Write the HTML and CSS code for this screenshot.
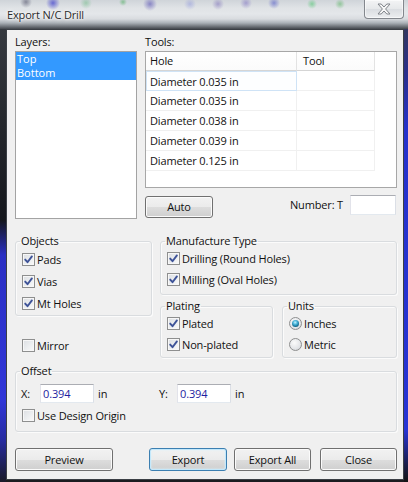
FILE: index.html
```html
<!DOCTYPE html>
<html>
<head>
<meta charset="utf-8">
<title>Export N/C Drill</title>
<link rel="stylesheet" href="styles.css">
</head>
<body>
<div class="window">
  <div class="titlebar">
    <span class="title">Export N/C Drill</span>
    <div class="close-btn">
      <svg width="14" height="12" viewBox="0 0 14 12"><polygon points="1,1 4.2,1 7,4 9.8,1 13,1 8.6,6 13,11 9.8,11 7,8 4.2,11 1,11 5.4,6" fill="#f7f7f7" stroke="#80848a" stroke-width="1" stroke-linejoin="round"/></svg>
    </div>
  </div>
  <div class="client">
    <div class="top-row">
      <div class="layers-col">
        <div class="label">Layers:</div>
        <div class="listbox">
          <div class="list-item sel">Top</div>
          <div class="list-item sel">Bottom</div>
        </div>
      </div>
      <div class="tools-col">
        <div class="label">Tools:</div>
        <div class="grid">
          <div class="grid-head"><div class="c1">Hole</div><div class="c2">Tool</div></div>
          <div class="grid-row"><div class="c1 focus">Diameter 0.035 in</div><div class="c2"></div></div>
          <div class="grid-row"><div class="c1">Diameter 0.035 in</div><div class="c2"></div></div>
          <div class="grid-row"><div class="c1">Diameter 0.038 in</div><div class="c2"></div></div>
          <div class="grid-row"><div class="c1">Diameter 0.039 in</div><div class="c2"></div></div>
          <div class="grid-row"><div class="c1">Diameter 0.125 in</div><div class="c2"></div></div>
        </div>
        <div class="tools-foot">
          <div class="btn auto">Auto</div>
          <div class="number"><span class="number-label">Number: T</span><div class="textbox num-box"></div></div>
        </div>
      </div>
    </div>

    <div class="middle">
      <div class="mid-left">
        <fieldset class="group">
          <legend>Objects</legend>
          <div class="group-body objects-body">
            <div class="opt opt22"><span class="cb"><svg viewBox="0 0 11 11"><path d="M2.2 5.6 L4.5 8.2 L8.9 2.4" fill="none" stroke="#3e5398" stroke-width="1.9" stroke-linecap="round" stroke-linejoin="round"/></svg></span>Pads</div>
            <div class="opt opt22"><span class="cb"><svg viewBox="0 0 11 11"><path d="M2.2 5.6 L4.5 8.2 L8.9 2.4" fill="none" stroke="#3e5398" stroke-width="1.9" stroke-linecap="round" stroke-linejoin="round"/></svg></span>Vias</div>
            <div class="opt opt22"><span class="cb"><svg viewBox="0 0 11 11"><path d="M2.2 5.6 L4.5 8.2 L8.9 2.4" fill="none" stroke="#3e5398" stroke-width="1.9" stroke-linecap="round" stroke-linejoin="round"/></svg></span>Mt Holes</div>
          </div>
        </fieldset>
        <div class="opt mirror"><span class="cb"></span>Mirror</div>
      </div>
      <div class="mid-right">
        <fieldset class="group manuf">
          <legend>Manufacture Type</legend>
          <div class="group-body">
            <div class="opt"><span class="cb"><svg viewBox="0 0 11 11"><path d="M2.2 5.6 L4.5 8.2 L8.9 2.4" fill="none" stroke="#3e5398" stroke-width="1.9" stroke-linecap="round" stroke-linejoin="round"/></svg></span>Drilling (Round Holes)</div>
            <div class="opt"><span class="cb"><svg viewBox="0 0 11 11"><path d="M2.2 5.6 L4.5 8.2 L8.9 2.4" fill="none" stroke="#3e5398" stroke-width="1.9" stroke-linecap="round" stroke-linejoin="round"/></svg></span>Milling (Oval Holes)</div>
          </div>
        </fieldset>
        <div class="pu-row">
          <fieldset class="group plating">
            <legend>Plating</legend>
            <div class="group-body">
              <div class="opt"><span class="cb"><svg viewBox="0 0 11 11"><path d="M2.2 5.6 L4.5 8.2 L8.9 2.4" fill="none" stroke="#3e5398" stroke-width="1.9" stroke-linecap="round" stroke-linejoin="round"/></svg></span>Plated</div>
              <div class="opt"><span class="cb"><svg viewBox="0 0 11 11"><path d="M2.2 5.6 L4.5 8.2 L8.9 2.4" fill="none" stroke="#3e5398" stroke-width="1.9" stroke-linecap="round" stroke-linejoin="round"/></svg></span>Non-plated</div>
            </div>
          </fieldset>
          <fieldset class="group units">
            <legend>Units</legend>
            <div class="group-body">
              <div class="opt"><span class="rb on"><span class="dot"></span></span>Inches</div>
              <div class="opt"><span class="rb"></span>Metric</div>
            </div>
          </fieldset>
        </div>
      </div>
    </div>

    <fieldset class="group offset">
      <legend>Offset</legend>
      <div class="group-body offset-body">
        <div class="coord-row">
          <div class="coord coord-x"><span class="coord-label">X:</span><div class="textbox coord-box">0.394</div><span class="unit">in</span></div>
          <div class="coord coord-y"><span class="coord-label ylabel">Y:</span><div class="textbox coord-box">0.394</div><span class="unit">in</span></div>
        </div>
        <div class="opt origin"><span class="cb"></span>Use Design Origin</div>
      </div>
    </fieldset>

    <div class="buttons">
      <div class="btn preview">Preview</div>
      <div class="btn export default">Export</div>
      <div class="btn exportall">Export All</div>
      <div class="btn close">Close</div>
    </div>
  </div>
</div>
</body>
</html>
```
FILE: styles.css
```css
* { box-sizing: border-box; }
html, body { margin: 0; padding: 0; }
body {
  width: 408px;
  height: 482px;
  overflow: hidden;
  font-family: "Open Sans", "Noto Sans", sans-serif;
  font-size: 11px;
  letter-spacing: -0.15px;
  color: #111;
  background: #1a1a1a;
}

.window {
  width: 408px;
  height: 482px;
  display: flex;
  flex-direction: column;
  padding: 0 4px 2px 6px;
  background:
    linear-gradient(#3a3e44 0, #26292e 120px, #15171c 220px, #2a2fc4 255px, #3036d8 400px, #262ba0 440px, #1a1a28 482px) left top / 6px 100% no-repeat,
    linear-gradient(#3a3e44 0, #2a2f88 70px, #2532cc 130px, #2734d4 430px, #1a1d48 465px, #141414 482px) right top / 4px 100% no-repeat,
    #1b1b1f;
}

.titlebar {
  height: 29px;
  margin: 0 -4px 0 -6px;
  padding: 0 4px 0 7px;
  display: flex;
  justify-content: space-between;
  align-items: flex-start;
  background:
    radial-gradient(circle at 26px 2px, rgba(40,40,70,.45) 0, rgba(40,40,70,0) 6px),
    radial-gradient(circle at 53px 3px, rgba(30,30,200,.6) 0, rgba(30,30,200,0) 7px),
    radial-gradient(circle at 86px 3px, rgba(60,170,90,.35) 0, rgba(60,170,90,0) 6px),
    radial-gradient(circle at 123px 2px, rgba(40,160,60,.45) 0, rgba(40,160,60,0) 4px),
    radial-gradient(circle at 150px 4px, rgba(60,50,170,.5) 0, rgba(60,50,170,0) 7px),
    radial-gradient(circle at 190px 4px, rgba(110,120,220,.35) 0, rgba(110,120,220,0) 6px),
    radial-gradient(circle at 218px 4px, rgba(90,70,170,.4) 0, rgba(90,70,170,0) 6px),
    radial-gradient(circle at 246px 3px, rgba(90,70,180,.4) 0, rgba(90,70,180,0) 6px),
    radial-gradient(circle at 274px 3px, rgba(40,50,190,.45) 0, rgba(40,50,190,0) 6px),
    radial-gradient(circle at 312px 4px, rgba(40,190,80,.45) 0, rgba(40,190,80,0) 5px),
    radial-gradient(circle at 340px 4px, rgba(60,170,70,.45) 0, rgba(60,170,70,0) 5px),
    radial-gradient(circle at 380px 4px, rgba(220,80,90,.4) 0, rgba(220,80,90,0) 6px),
    linear-gradient(#cfd4d9 0, #e0e3e6 8px, #e4e7ea 14px, #d8dbdf 19px, #aab0b6 23px, #656a70 27px, #43474d 29px);
}
.title {
  margin-top: 8px;
  line-height: 14px;
  color: #2a2a2a;
  text-shadow: 0 0 5px #fff, 0 0 2px #fff;
}
.close-btn {
  width: 40px;
  height: 19px;
  border: 1px solid #83878d;
  border-top: none;
  border-radius: 0 0 4px 4px;
  background: linear-gradient(#f3f4f5 0, #e6e8ea 50%, #dadde1 51%, #eceef0 100%);
  box-shadow: inset 0 0 0 1px rgba(255,255,255,.55);
  display: flex;
  align-items: center;
  justify-content: center;
  padding-bottom: 1px;
}
.close-btn svg { display: block; }

.client {
  flex: 1;
  background: #f0f0f0;
  border: 1px solid #3b3f45;
  padding: 5px 6px 8px 8px;
  display: flex;
  flex-direction: column;
}

.label { line-height: 14px; height: 14px; }

.top-row { display: flex; gap: 8px; }
.layers-col { width: 122px; }
.tools-col { flex: 1; }

.listbox {
  margin-top: 2px;
  height: 168px;
  border: 1px solid #a3a3a3;
  background: #fff;
}
.list-item {
  height: 14px;
  line-height: 14px;
  font-size: 11px;
  letter-spacing: 0;
  padding-left: 1px;
  overflow: hidden;
}
.list-item.sel { background: #3399ff; color: #fff; }

.grid {
  margin-top: 2px;
  height: 137px;
  border: 1px solid #a7a7a7;
  background: #fff;
}
.grid-head, .grid-row { display: flex; }
.grid-head { height: 19px; line-height: 18px; }
.grid-head .c1, .grid-head .c2 {
  border-bottom: 1px solid #d5d5d5;
  border-right: 1px solid #e3e3e3;
  background: linear-gradient(#ffffff, #fbfbfb);
}
.c1 { width: 151px; padding-left: 4px; }
.c2 { width: 78px; padding-left: 6px; }
.grid-row { height: 20px; line-height: 19px; }
.grid-row .c1, .grid-row .c2 {
  border-bottom: 1px solid #f0f0f0;
  border-right: 1px solid #f0f0f0;
}
.grid-row .c1.focus {
  border: 1px solid #cfe3f6;
  padding-left: 3px;
  background: #fdfeff;
}

.tools-foot {
  margin-top: 7px;
  display: flex;
  justify-content: space-between;
  align-items: flex-start;
}
.number { display: flex; align-items: center; gap: 7px; margin-right: 1px; }
.number-label { line-height: 20px; }

.textbox {
  background: #fff;
  border: 1px solid;
  border-color: #abadb3 #dbdfe6 #e3e9ef #e2e3ea;
}
.num-box { width: 46px; height: 20px; }

.btn {
  height: 23px;
  border: 1px solid #707070;
  border-radius: 3px;
  background: linear-gradient(#f2f2f2 0, #ebebeb 50%, #dddddd 51%, #cfcfcf 100%);
  box-shadow: inset 0 0 0 1px #fbfbfb;
  display: flex;
  align-items: center;
  justify-content: center;
  line-height: 14px;
  color: #111;
}
.btn.auto { width: 68px; height: 22px; margin-top: 1px; }
.btn.default {
  border-color: #3c7fb1;
  box-shadow: inset 0 0 0 1px #c3e8fb, inset 0 0 2px 1px #d9f1fd;
}

.middle {
  margin-top: 15px;
  display: flex;
  gap: 8px;
}
.mid-left { width: 137px; }
.mid-right { flex: 1; }

.group {
  margin: 0;
  padding: 0 0 0 4px;
  min-width: 0;
  border: 1px solid #d9dcdf;
  border-radius: 3px;
  box-shadow: inset 1px 1px 0 #fbfbfb, 1px 1px 0 #fbfbfb;
}
.group legend {
  padding: 0 1px;
  line-height: 14px;
  height: 14px;
}
.group-body { padding-left: 2px; }

.opt {
  display: flex;
  align-items: center;
  height: 21px;
  white-space: nowrap;
}
.opt22 { height: 22px; }
.objects-body { padding-bottom: 1px; }
.manuf .group-body { padding-bottom: 4px; }
.pu-row { margin-top: 4px; display: flex; gap: 9px; }
.plating { width: 113px; }
.units { flex: 1; }
.pu-row .group-body { padding-bottom: 2px; }

.mirror { margin-top: 19px; padding-left: 7px; }

.cb {
  width: 13px;
  height: 13px;
  flex: none;
  margin-right: 2px;
  border: 1px solid #8e8f8f;
  background: linear-gradient(135deg, #dcdfe3 0, #eceef0 55%, #fafafa 100%);
  box-shadow: inset 0 0 0 1px #f7f7f7;
  display: flex;
  align-items: center;
  justify-content: center;
}
.cb svg { width: 11px; height: 11px; display: block; }

.rb {
  width: 13px;
  height: 13px;
  flex: none;
  margin-right: 2px;
  border: 1px solid #8e8f8f;
  border-radius: 50%;
  background: radial-gradient(circle at 40% 35%, #fbfbfb 0, #e3e5e8 60%, #c9ccd1 100%);
  display: flex;
  align-items: center;
  justify-content: center;
}
.rb .dot {
  width: 7px;
  height: 7px;
  border-radius: 50%;
  background: radial-gradient(circle at 45% 35%, #c4f3ff 0, #47b3d8 35%, #136a8e 70%, #0b4663 100%);
}

.offset { margin-top: 6px; }
.offset-body { padding-left: 0; padding-bottom: 5px; }
.coord-row { display: flex; height: 22px; margin-top: 4px; align-items: center; }
.coord { display: flex; align-items: center; }
.coord-x { width: 139px; }
.coord-label { width: 20px; padding-left: 1px; }
.ylabel { width: 18px; padding-left: 0; }
.coord-box {
  width: 54px;
  height: 19px;
  line-height: 17px;
  padding-left: 2px;
  color: #1c22a0;
}
.unit { margin-left: 4px; }
.origin { margin-top: 1px; padding-left: 2px; }

.buttons {
  margin-top: 16px;
  display: flex;
}
.btn.preview { width: 98px; }
.btn.export { width: 78px; margin-left: 36px; }
.btn.exportall { width: 77px; margin-left: 7px; }
.btn.close { width: 77px; margin-left: 9px; }
```
